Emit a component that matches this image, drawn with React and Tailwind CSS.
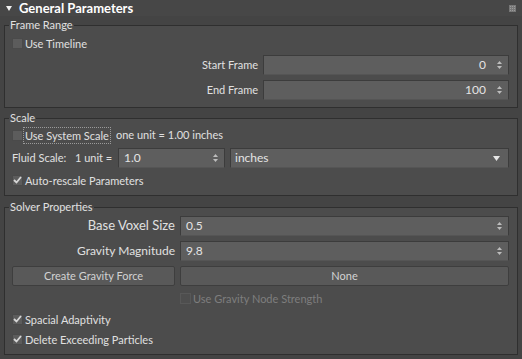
import React from 'react'

const FONT = { fontFamily: 'Lato, "Noto Sans", sans-serif' }

function SpinArrows() {
  return (
    <svg width="7" height="10" viewBox="0 0 7 10" className="shrink-0">
      <path d="M3.5 1 L6 4 L1 4 Z" fill="#bdbdbd" />
      <path d="M1 6 L6 6 L3.5 9 Z" fill="#bdbdbd" />
    </svg>
  )
}

function Spinner({ value, align = 'left', className = '' }) {
  return (
    <div
      className={`h-[20px] flex items-center bg-[#5e5e5e] border border-[#3c3c3c] border-b-[#555] pl-[5px] pr-[5px] ${className}`}
    >
      <span className={`flex-1 text-[12px] text-[#e4e4e4] ${align === 'right' ? 'text-right pr-[10px]' : ''}`}>{value}</span>
      <SpinArrows />
    </div>
  )
}

function Check({ checked, disabled, label, focus }) {
  return (
    <div className="h-[16px] flex items-center">
      <span
        className={`w-[11px] h-[11px] flex items-center justify-center border ${
          disabled ? 'bg-[#4e4e4e] border-[#585858]' : 'bg-[#5c5c5c] border-[#4a4a4a]'
        }`}
      >
        {checked && (
          <svg width="9" height="8" viewBox="0 0 9 8">
            <path d="M1 4 L3.5 6.5 L8 1" stroke="#d6d6d6" strokeWidth="1.8" fill="none" />
          </svg>
        )}
      </span>
      <span
        className={`px-[1px] leading-[15px] ${
          focus ? 'border border-dotted border-[#9a9a9a]' : 'border border-transparent'
        } ${disabled ? 'text-[#7e7e7e]' : 'text-[#e0e0e0]'}`}
      >
        {label}
      </span>
    </div>
  )
}

function Group({ title, className = '', children }) {
  return (
    <fieldset className={`mx-[4px] border border-[#2f2f2f] bg-[#4c4c4c] pl-[7px] pr-[8px] pb-[7px] ${className}`}>
      <legend className="-ml-[3px] px-[1px] leading-[14px] text-[#e0e0e0]">{title}</legend>
      {children}
    </fieldset>
  )
}

function Button({ children, className = '' }) {
  return (
    <div
      className={`h-[20px] flex items-center justify-center rounded-[2px] bg-[#595959] border border-[#3e3e3e] text-[#d2d2d2] ${className}`}
    >
      {children}
    </div>
  )
}

export default function App() {
  return (
    <div className="w-[522px] h-[359px] bg-[#444444] text-[11px] overflow-hidden" style={FONT}>
      {/* Rollout header */}
      <div className="h-[16px] flex items-center bg-[#474747] pl-[6px] pr-[7px]">
        <svg width="6" height="5" viewBox="0 0 6 5" className="mr-[7px]">
          <path d="M0 0 L6 0 L3 5 Z" fill="#f0f0f0" />
        </svg>
        <span className="font-bold text-[13px] text-white flex-1 leading-[16px]">General Parameters</span>
        <div className="grid grid-cols-3 gap-[1px]">
          {Array.from({ length: 9 }).map((_, i) => (
            <span key={i} className="w-[1px] h-[1px] bg-[#9a9a9a] outline outline-1 outline-[#777]" />
          ))}
        </div>
      </div>

      <Group title="Frame Range" className="mt-[2px]">
        <div className="pt-[3px]">
          <Check label="Use Timeline" />
        </div>
        <div className="mt-[4px] flex items-center justify-end">
          <span className="text-[#e0e0e0] mr-[5px]">Start Frame</span>
          <Spinner value="0" align="right" className="w-[246px]" />
        </div>
        <div className="mt-[5px] flex items-center justify-end">
          <span className="text-[#e0e0e0] mr-[5px]">End Frame</span>
          <Spinner value="100" align="right" className="w-[246px]" />
        </div>
      </Group>

      <Group title="Scale" className="mt-[3px]">
        <div className="mt-[2px] h-[17px] flex items-center">
          <Check label="Use System Scale" focus />
          <span className="ml-[5px] text-[#e0e0e0]">one unit = 1.00 inches</span>
        </div>
        <div className="mt-[4px] flex items-center">
          <span className="text-[#e0e0e0] w-[63px]">Fluid Scale:</span>
          <span className="text-[#e0e0e0] w-[43px]">1 unit =</span>
          <Spinner value="1.0" className="w-[107px]" />
          <div className="ml-[5px] flex-1 h-[20px] flex items-center bg-[#5e5e5e] border border-[#3c3c3c] border-b-[#555] pl-[4px] pr-[8px]">
            <span className="flex-1 text-[12px] text-[#e4e4e4]">inches</span>
            <svg width="7" height="5" viewBox="0 0 7 5">
              <path d="M0 0 L7 0 L3.5 5 Z" fill="#e6e6e6" />
            </svg>
          </div>
        </div>
        <div className="mt-[4px]">
          <Check label="Auto-rescale Parameters" checked />
        </div>
      </Group>

      <Group title="Solver Properties" className="mt-[4px]">
        <div className="mt-[2px] flex items-center">
          <span className="w-[168px] text-right pr-[5px] text-[13px] text-[#e0e0e0]">Base Voxel Size</span>
          <Spinner value="0.5" className="flex-1" />
        </div>
        <div className="mt-[5px] flex items-center">
          <span className="w-[168px] text-right pr-[5px] text-[12px] text-[#e0e0e0]">Gravity Magnitude</span>
          <Spinner value="9.8" className="flex-1" />
        </div>
        <div className="mt-[5px] flex items-center gap-[5px]">
          <Button className="w-[163px]">Create Gravity Force</Button>
          <Button className="flex-1">None</Button>
        </div>
        <div className="mt-[4px] pl-[168px]">
          <Check label="Use Gravity Node Strength" disabled />
        </div>
        <div className="mt-[5px]">
          <Check label="Spacial Adaptivity" checked />
        </div>
        <div className="mt-[4px]">
          <Check label="Delete Exceeding Particles" checked />
        </div>
      </Group>
    </div>
  )
}
